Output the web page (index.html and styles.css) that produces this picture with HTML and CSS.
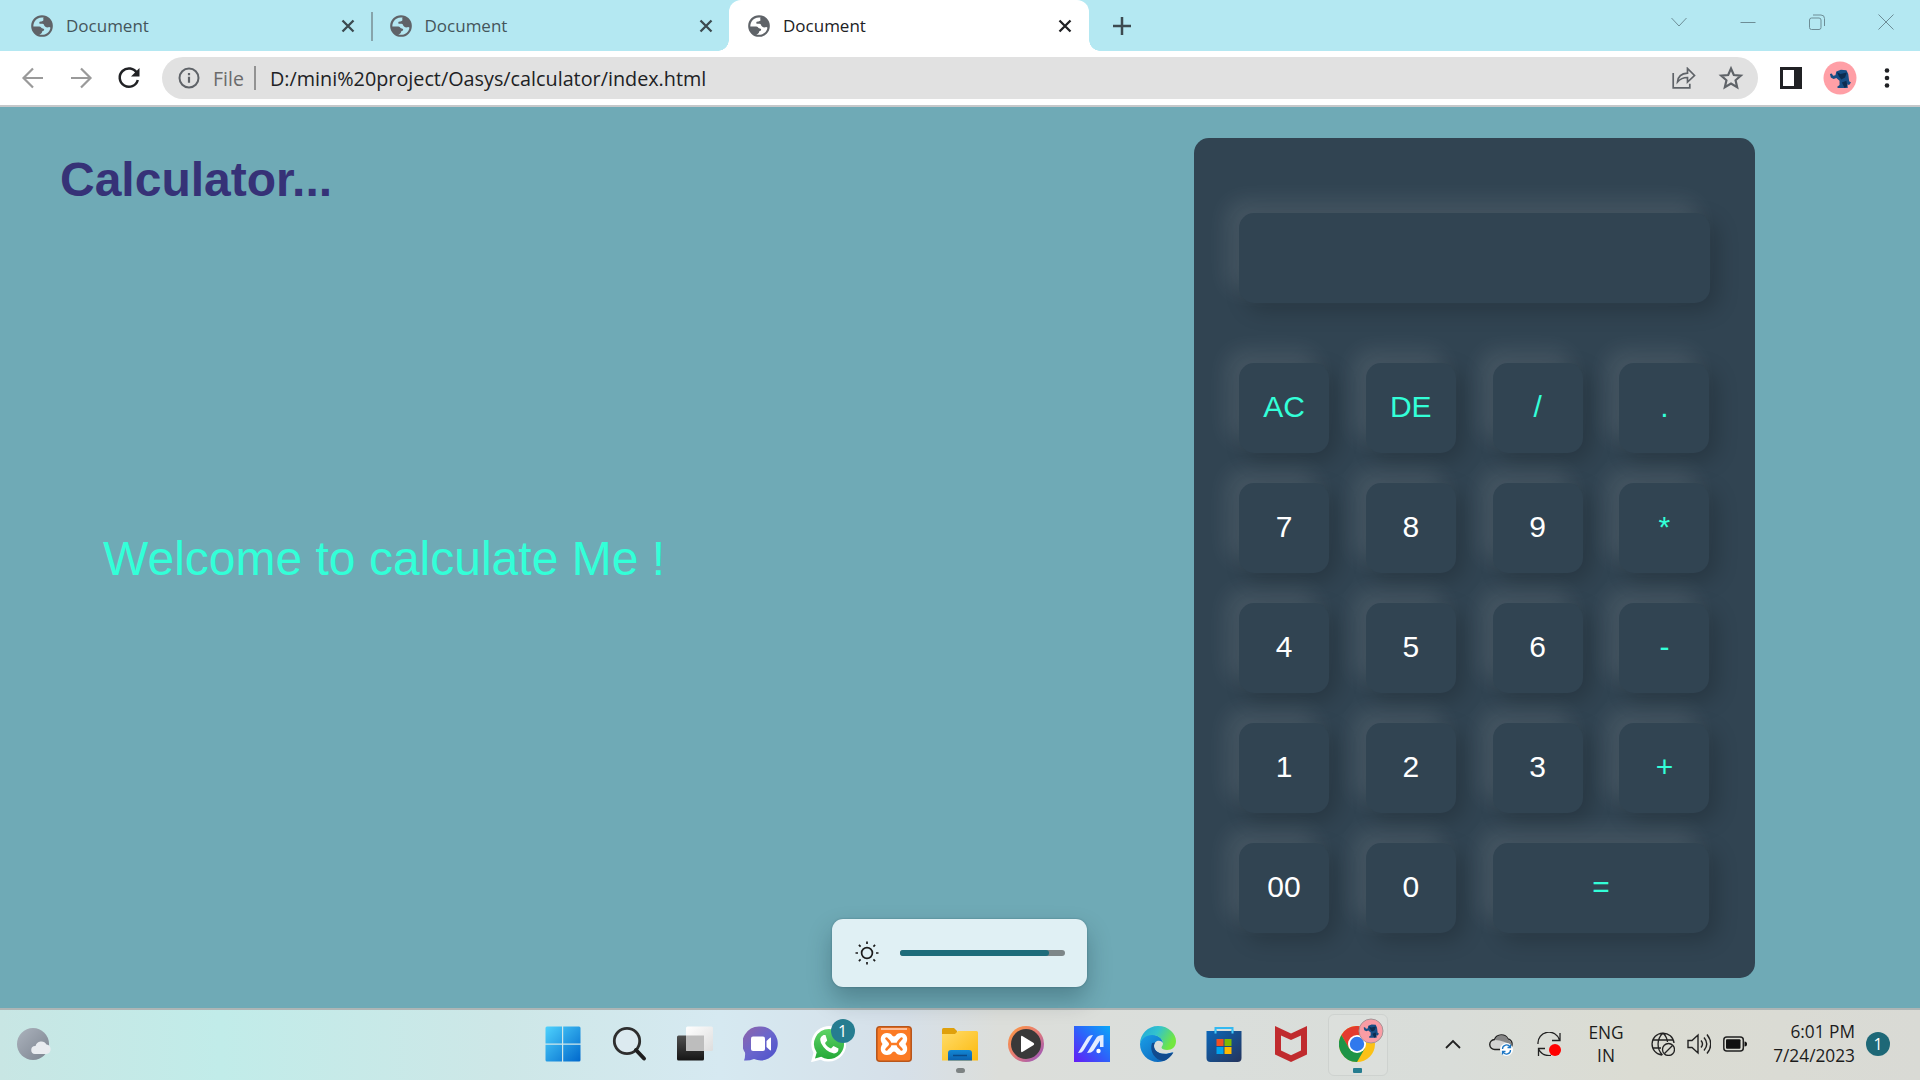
FILE: index.html
```
<!DOCTYPE html>
<html lang="en">
<head>
<meta charset="utf-8">
<title>Document</title>
<link rel="stylesheet" href="styles.css">
</head>
<body>
<svg class="defs" width="0" height="0">
  <defs>
    <symbol id="globe" viewBox="0 0 24 24"><path fill="#5f6368" fill-rule="evenodd" d="M12 2a10 10 0 1 0 0 20 10 10 0 0 0 0-20zM13.500 4.200A8 8 0 0 0 4 12.500h5.500c1.200 0 1.500 1 2.500 1.500s2 0 2 1.500-2 1-2 2-.5 1.500-2.500 2.300c5 1.200 9.500-1.500 10.300-6.300-1.300-1.500-2.300.5-4.300-.5s-1-2.500-3-3-3 .5-3-1 2.500-.8 3.500-1.800-.5-1.500.5-3z"/></symbol>
    <symbol id="cross" viewBox="0 0 14 14"><path d="M1.500 1.500l11 11M12.500 1.500l-11 11" stroke="currentColor" stroke-width="2.300"/></symbol>
    <symbol id="elephant" viewBox="0 0 24 24"><path fill="#164f86" d="M1 7.500L3 7l1.500 2.500L7 9l1-4 5-2 6 .5 2 4 1 8 2 1.500-2 2.500-2-.5.500 4H9.500l-.500-1.500 2.500-2V15L8 12l-3 1-3-1.500z"/><path fill="#0c2c50" d="M8.500 5.500l4 2 7-1.500-2 5.500-4 2-2.500-3zM14 17l5-2 1 6-3 2z"/></symbol>
    <linearGradient id="winG" x1="0" y1="0" x2="1" y2="1"><stop stop-color="#4ed2fd"/><stop offset="1" stop-color="#0068cc"/></linearGradient>
    <linearGradient id="darkG" x1="0" y1="0" x2="0" y2="1"><stop stop-color="#505050"/><stop offset="1" stop-color="#151515"/></linearGradient>
    <linearGradient id="lightG" x1="0" y1="0" x2="1" y2="1"><stop stop-color="#fff"/><stop offset="1" stop-color="#ddd"/></linearGradient>
    <linearGradient id="chatG" x1="0" y1="0" x2="1" y2="1"><stop stop-color="#9064a8"/><stop offset=".5" stop-color="#6a66cc"/><stop offset="1" stop-color="#4b50cc"/></linearGradient>
    <linearGradient id="waG" x1="0" y1="0" x2="0" y2="1"><stop stop-color="#5fd467"/><stop offset="1" stop-color="#25a938"/></linearGradient>
    <linearGradient id="folderG" x1="0" y1="0" x2="1" y2="1"><stop stop-color="#ffdc6a"/><stop offset="1" stop-color="#fcb90d"/></linearGradient>
    <linearGradient id="blueG" x1="0" y1="0" x2="0" y2="1"><stop stop-color="#1287d4"/><stop offset="1" stop-color="#0c62b0"/></linearGradient>
    <linearGradient id="mediaG" x1="0" y1="0" x2="1" y2="1"><stop stop-color="#ff9b3c"/><stop offset=".5" stop-color="#e57a75"/><stop offset="1" stop-color="#8d50c8"/></linearGradient>
    <linearGradient id="asusG" x1="0" y1="1" x2="1" y2="0"><stop stop-color="#661cf5"/><stop offset=".5" stop-color="#2d62fa"/><stop offset="1" stop-color="#0aa8f8"/></linearGradient>
    <linearGradient id="edgeA" x1="0" y1="0" x2="1" y2=".4"><stop stop-color="#1fa5dc"/><stop offset=".5" stop-color="#33c3cd"/><stop offset="1" stop-color="#72e73f"/></linearGradient>
    <linearGradient id="edgeB" x1="0" y1="0" x2="1" y2="1"><stop stop-color="#1aa0e8"/><stop offset="1" stop-color="#0a5cb4"/></linearGradient>
    <linearGradient id="storeG" x1="0" y1="0" x2="1" y2="1"><stop stop-color="#0b66b8"/><stop offset="1" stop-color="#25345c"/></linearGradient>
    <linearGradient id="moonG" x1="0" y1="0" x2="1" y2="1"><stop stop-color="#acb3bd"/><stop offset="1" stop-color="#7b838f"/></linearGradient>
  </defs>
</svg>

<header class="tabstrip">
  <div class="tab"><svg class="favicon"><use href="#globe"/></svg><span class="tab-title">Document</span><svg class="close"><use href="#cross"/></svg></div>
  <div class="tab tab-split"><svg class="favicon"><use href="#globe"/></svg><span class="tab-title">Document</span><svg class="close"><use href="#cross"/></svg></div>
  <div class="tab tab-active"><svg class="favicon"><use href="#globe"/></svg><span class="tab-title">Document</span><svg class="close"><use href="#cross"/></svg></div>
  <svg class="new-tab" viewBox="0 0 18 18"><path d="M9 0v18M0 9h18" stroke="#3c4a50" stroke-width="2.500"/></svg>
  <div class="window-controls">
    <svg viewBox="0 0 16 16"><path d="M.5 4l7.500 8 7.500-8"/></svg>
    <svg viewBox="0 0 16 16"><path d="M.5 8.500h15"/></svg>
    <svg viewBox="0 0 16 16"><rect x=".5" y="4" width="11.500" height="11.500" rx="2"/><path d="M4 1h8q3.500 0 3.500 3.500v7.500"/></svg>
    <svg viewBox="0 0 16 16"><path d="M.5 .5l15 15M15.500 .5l-15 15"/></svg>
  </div>
</header>

<nav class="toolbar">
  <svg class="nav-icon" viewBox="0 0 24 24"><path d="M22 12H3M12 2.500L2.500 12l9.500 9.500" stroke="#9a9a9a"/></svg>
  <svg class="nav-icon" viewBox="0 0 24 24"><path d="M2 12h19M12 2.500l9.500 9.500-9.500 9.500" stroke="#9a9a9a"/></svg>
  <svg class="nav-icon" viewBox="0 0 24 24"><path d="M20 7.200A9.200 9.200 0 1 0 20.800 14" stroke="#202124" stroke-width="2.500"/><path d="M22.500 2v8.500H14z" fill="#202124"/></svg>
  <div class="omnibox">
    <svg class="info" viewBox="0 0 22 22"><circle cx="11" cy="11" r="9.500" fill="none" stroke="#5f6368" stroke-width="2"/><path d="M11 9.800v6M11 6v2.200" stroke="#5f6368" stroke-width="2.200"/></svg>
    <span class="scheme">File</span>
    <span class="divider"></span>
    <span class="url">D:/mini%20project/Oasys/calculator/index.html</span>
    <svg class="share" viewBox="0 0 24 22"><path d="M1.200 6v14.800h16.600v-4" /><path d="M5.500 15C6 9 10 6.500 15.500 6.200V1.500l7 7-7 6.500v-4.500c-4 0-7 1-10 4.500z"/></svg>
    <svg class="star" viewBox="0 0 24 24"><path d="M12 3.200l2.600 6 6.500.6-4.900 4.300 1.500 6.400-5.700-3.400-5.700 3.400 1.500-6.400-4.900-4.300 6.500-.6z"/></svg>
  </div>
  <svg class="side-panel" viewBox="0 0 22 22"><path fill="#202124" fill-rule="evenodd" d="M0 0h22v22H0zM3 3v16h11V3z"/></svg>
  <svg class="avatar" viewBox="0 0 34 34"><circle cx="17" cy="17" r="16.500" fill="#ff9fa6"/><use href="#elephant" x="6" y="6" width="22" height="22"/></svg>
  <svg class="menu" viewBox="0 0 6 22"><circle cx="3" cy="3.500" r="2.300"/><circle cx="3" cy="11" r="2.300"/><circle cx="3" cy="18.500" r="2.300"/></svg>
</nav>

<main class="page">
  <section class="intro">
    <h1>Calculator...</h1>
    <p>Welcome to calculate Me !</p>
  </section>
  <section class="calculator">
    <div class="display"></div>
    <div class="keys">
      <button class="key op">AC</button><button class="key op">DE</button><button class="key op">/</button><button class="key op">.</button>
      <button class="key">7</button><button class="key">8</button><button class="key">9</button><button class="key op">*</button>
      <button class="key">4</button><button class="key">5</button><button class="key">6</button><button class="key op">-</button>
      <button class="key">1</button><button class="key">2</button><button class="key">3</button><button class="key op">+</button>
      <button class="key">00</button><button class="key">0</button><button class="key op equal">=</button>
    </div>
  </section>
  <aside class="brightness">
    <svg class="sun" viewBox="0 0 24 24"><circle cx="12" cy="12" r="5.400"/><path d="M12 .5v2.500M12 21v2.500M.5 12H3M21 12h2.500M3.900 3.900l1.700 1.700M18.400 18.400l1.700 1.700M3.900 20.100l1.700-1.700M18.400 5.600l1.700-1.700"/></svg>
    <div class="track"><div class="level" style="width: 90.500%"></div></div>
  </aside>
</main>

<footer class="taskbar">
  <svg class="weather" viewBox="0 0 36 34"><circle cx="16" cy="17" r="16" fill="url(#moonG)"/><path d="M18 27a4 4 0 0 1 .5-8 6 6 0 0 1 11-1.500 4.800 4.800 0 0 1 0 9.500z" fill="#e9ecf0"/></svg>
  <div class="apps">
    <div class="app"><svg viewBox="0 0 36 36"><path fill="url(#winG)" d="M.5 2q0-1.500 1.500-1.500h15v17H.5zM18.200.5H34q1.500 0 1.500 1.500v15.500H18.200zM.5 18.700H17v16.800H2q-1.500 0-1.500-1.500zM18.200 18.700h17.300V34q0 1.500-1.500 1.500H18.200z"/></svg></div>
    <div class="app"><svg viewBox="0 0 36 36"><circle cx="16" cy="15" r="12.700" fill="#dceaf0" stroke="#2e2e2e" stroke-width="2.800"/><path d="M25 24l8 8.500" stroke="#1e1e1e" stroke-width="4" stroke-linecap="round"/></svg></div>
    <div class="app"><svg viewBox="0 0 36 36"><rect y="9.500" width="27" height="25" rx="1.500" fill="url(#darkG)"/><rect x="9" y=".5" width="27" height="24.500" rx="1.500" fill="url(#lightG)"/><path fill="#bdbdbd" d="M9 9.500h18V25H10q-1 0-1-1z"/></svg></div>
    <div class="app"><svg viewBox="0 0 36 36"><path fill="url(#chatG)" d="M18 .5a17 17 0 1 1-7 32.600Q6 35 1 34.500q1.500-4 1-8A17 17 0 0 1 18 .5z"/><rect x="8" y="10.500" width="14" height="14.500" rx="2" fill="#fff"/><path fill="#fff" d="M23.500 15l3.500-3.300q1-.5 1 .8v11q0 1.300-1 .8L23.500 21z"/></svg></div>
    <div class="app"><svg viewBox="0 0 36 36"><path fill="#fff" d="M19 0a17.800 17.800 0 1 1-8.500 33.700L1 36.200l2.500-9.500A18 18 0 0 1 19 0z"/><path fill="url(#waG)" d="M19 3a15 15 0 1 1-7.800 27.800L5 32.500l1.700-6A15 15 0 0 1 19 3z"/><path fill="#fff" d="M13.500 9q-5 2.500-2.500 8 4.500 9 13 10.500 4.500-.5 4.500-5l-5-2.500-2.500 2.500q-4.500-2-6-5.500l2.200-2.500L15.500 9z"/></svg><span class="badge">1</span></div>
    <div class="app"><svg viewBox="0 0 36 36"><rect x=".8" y=".8" width="34.400" height="34.400" rx="3" fill="#fb7a24" stroke="#b8561c" stroke-width="1.600"/><path d="M5 3h26" stroke="#ffbe98" stroke-width="2"/><path fill="#fff" d="M11 7c5 0 5 3.500 7 3.500S20 7 25 7c6 0 8 6.500 4.500 11C33 22.500 31 29 25 29c-5 0-5-3.500-7-3.500S16 29 11 29C5 29 3 22.500 6.500 18 3 13.500 5 7 11 7z"/><path fill="none" stroke="#fb7a24" stroke-width="2.600" stroke-linecap="round" d="M10.500 12.500c1.500 2 3.500 2.500 4 5.500-.5 3-2.500 3.500-4 5.500M25.500 12.500c-1.500 2-3.500 2.500-4 5.500.5 3 2.500 3.500 4 5.500M14.500 18h7"/></svg></div>
    <div class="app running"><svg viewBox="0 0 36 36"><path fill="#dfa00c" d="M0 3.500Q0 2 1.500 2H12l3 3v4H0z"/><path fill="url(#folderG)" d="M0 8h13l3-3h18.500Q36 5 36 6.500V34.500H0z"/><path fill="url(#blueG)" d="M6 34.500V27q0-3 3-3h18q3 0 3 3v7.500z"/><path d="M11 29.500h14" stroke="#0a4a88" stroke-width="1.500"/></svg></div>
    <div class="app"><svg viewBox="0 0 36 36"><circle cx="18" cy="18" r="18" fill="url(#mediaG)"/><circle cx="18" cy="18" r="15" fill="#393939"/><path fill="#fff" d="M13 11.200q0-2 1.700-1l11 6.800q1 1 0 2l-11 6.800q-1.700 1-1.700-1z"/></svg></div>
    <div class="app"><svg viewBox="0 0 36 36"><path fill="url(#asusG)" d="M0 0h36v36H0z"/><path fill="#e3ecff" d="M4 27L13 12q2-3 6-3l-9.500 15.500q-1.500 2.500-5.500 2.500zM13 27l9.500-15.500Q24 9 29.500 9v12H26v-6.500l-6.500 10q-2 2.500-6.500 2.500z"/><circle cx="24.500" cy="25" r="2.200" fill="#fff"/></svg></div>
    <div class="app"><svg viewBox="0 0 36 36"><path fill="url(#edgeB)" d="M0 18c1-8 9-11 15-9 5 1 8 5 8 8-3-4-9-2-9 3 0 7 9 10 19 6-3 6-8 10-15 10C8 36 0 28 0 18z"/><path fill="#114b8f" d="M12 17c-3 8 3 17 11 18 4-1 8-4 10.500-8.500C24 30 14 27 14 20q0-2 1-3.500z"/><path fill="url(#edgeA)" d="M0 18C0 8 8 0 18 0c11 0 18 8 18 15 0 6-4 9-9 9-3 0-5.500-1-5.500-2.500 0-1 1.500-1.500 1.500-4.500 0-4-5-8-11-8C6 9 1 13 0 18z"/></svg></div>
    <div class="app"><svg viewBox="0 0 36 36"><path fill="none" stroke="#33b9f1" stroke-width="2" d="M9.500 8V2h17v6"/><path fill="url(#storeG)" d="M.5 5h35v27q0 4-4 4h-27q-4 0-4-4z"/><path fill="none" stroke="#45cbfa" stroke-width="2" d="M9.500 7.500V4M26.500 7.500V4"/><path fill="#f25022" d="M10.500 13h7v7h-7z"/><path fill="#7fba00" d="M18.500 13h7v7h-7z"/><path fill="#00a4ef" d="M10.500 21h7v7h-7z"/><path fill="#ffb900" d="M18.500 21h7v7h-7z"/></svg></div>
    <div class="app"><svg viewBox="0 0 36 36"><path fill="#c02b2e" fill-rule="evenodd" d="M2 0l16 7.500L34 0v28.500L18 36 2 28.500zM8 9.500v15l10 4.700 10-4.700v-15L18 14z"/></svg></div>
    <div class="app current"><svg viewBox="0 0 36 36"><circle cx="18" cy="18" r="18" fill="#fbc116"/><path fill="#e33b2e" d="M2.400 9A18 18 0 0 1 33.600 9H18l-8 13.500z"/><path fill="#1e9447" d="M2.400 9A18 18 0 0 0 18 36l7.800-13.500H10.200z"/><circle cx="18" cy="18" r="9" fill="#fff"/><circle cx="18" cy="18" r="7.200" fill="#3079ed"/></svg><svg class="profile-badge" viewBox="0 0 26 26"><circle cx="13" cy="13" r="12" fill="#f99ca4" stroke="#a59396"/><use href="#elephant" x="5" y="4.500" width="16" height="16"/></svg></div>
  </div>
  <div class="tray">
    <svg class="chevron" viewBox="0 0 16 10"><path d="M1 9l7-7 7 7" fill="none" stroke="#222" stroke-width="1.800"/></svg>
    <svg class="cloud" viewBox="0 0 24 24"><path d="M6 17.500a5 5 0 0 1-.5-10A7.500 7.500 0 0 1 19 7a5 5 0 0 1 4 5.500q0 3-3 5z" fill="#d3d3d3" stroke="#222" stroke-width="1.400"/><path d="M6 8a7 7 0 0 1 13-.5q3.500 1 3.500 6-7-5-16.500-5.500z" fill="#868686"/><circle cx="17.500" cy="17.500" r="6.500" fill="#fff"/><path d="M13.500 17a4 4 0 0 1 7.500-2M21.500 18a4 4 0 0 1-7.500 2M21.500 12.500V15.500H18.500M13.500 22.500v-3h3" fill="none" stroke="#1b76c4" stroke-width="1.300"/></svg>
    <svg class="update" viewBox="0 0 24 24"><path d="M1 12A11 11 0 0 1 22.500 8M23 1v7.500h-8M14 23.500C9 24 4 22 1.500 17M1.500 24v-7.500H8" fill="none" stroke="#222" stroke-width="1.300"/><circle cx="18" cy="18" r="6" fill="#f00"/></svg>
    <div class="lang"><span>ENG</span><span>IN</span></div>
    <div class="status">
      <svg viewBox="0 0 24 24"><g fill="none" stroke="#222" stroke-width="1.300"><path d="M11 23A11 11 0 1 1 23 11M1.500 8h21M1.500 16H10M11.500 23c-6-6-6-16 .5-22M12 1q4 4 4.500 9"/><circle cx="17.500" cy="17.500" r="6"/><path d="M13.500 21.500l8-8"/></g></svg>
      <svg viewBox="0 0 24 24"><path d="M1 8.500h4L11 3v18l-6-5.500H1zM14 8.500q3 3.500 0 7M17 5.500q5.500 6.500 0 13M20 2.500q7.500 9.500 0 19" fill="none" stroke="#222" stroke-width="1.400"/></svg>
      <svg viewBox="0 0 24 24"><rect x=".8" y="5" width="19.500" height="14" rx="3" fill="none" stroke="#222" stroke-width="1.500"/><rect x="3" y="7.200" width="14.500" height="9.600" rx="1" fill="#111"/><path d="M21.500 9.500q2.500 0 2.500 2.500t-2.500 2.500z" fill="#111"/></svg>
    </div>
    <div class="clock"><span>6:01 PM</span><span>7/24/2023</span></div>
    <span class="notifications">1</span>
  </div>
</footer>
</body>
</html>
```
FILE: styles.css
```
* { box-sizing: border-box; }
body {
  margin: 0;
  width: 1920px;
  height: 1080px;
  overflow: hidden;
  display: flex;
  flex-direction: column;
  font-family: "Open Sans", "Noto Sans", sans-serif;
}
svg { display: block; flex: none; }
.defs { position: absolute; }

/* tab strip */
.tabstrip {
  height: 51px;
  flex: none;
  display: flex;
  align-items: center;
  background: #b4e8f2;
  padding-left: 12px;
}
.tab {
  width: 358.5px;
  height: 51px;
  flex: none;
  display: flex;
  align-items: center;
  padding: 0 16px 0 17px;
  color: #44555b;
  position: relative;
}
.tab-split::before {
  content: "";
  position: absolute;
  left: 0;
  top: 12px;
  width: 2px;
  height: 29px;
  background: #87a4ab;
}
.tab-active {
  width: 360px;
  background: #fff;
  border-radius: 12px 12px 0 0;
  color: #202124;
}
.tab-active::before, .tab-active::after {
  content: "";
  position: absolute;
  bottom: 0;
  width: 11px;
  height: 11px;
}
.tab-active::before { left: -11px; background: radial-gradient(circle at 0 0, transparent 10.500px, #fff 11px); }
.tab-active::after { right: -11px; background: radial-gradient(circle at 100% 0, transparent 10.500px, #fff 11px); }
.favicon { width: 26px; height: 26px; }
.tab-title { flex: 1; margin-left: 11px; font-size: 17px; }
.close { width: 14px; height: 14px; color: #3c4a50; }
.tab-active .close { color: #202124; margin-right: 1px; }
.new-tab { width: 18px; height: 18px; margin-left: 24px; }
.window-controls { margin-left: auto; display: flex; gap: 53px; padding-right: 26px; margin-bottom: 8px; }
.window-controls svg { width: 16px; height: 16px; fill: none; stroke: #6d8d96; stroke-width: 1; }

/* address bar */
.toolbar {
  height: 56px;
  flex: none;
  display: flex;
  align-items: center;
  background: #fff;
  border-bottom: 2px solid #c6c8ca;
  padding-left: 21px;
}
.nav-icon { width: 24px; height: 24px; margin-right: 24px; fill: none; stroke-width: 2.200; }
.omnibox {
  width: 1596px;
  height: 42px;
  margin-left: -3px;
  border-radius: 21px;
  background: #e1e1e1;
  display: flex;
  align-items: center;
  padding: 0 16px;
  font-size: 19.800px;
}
.info { width: 22px; height: 22px; }
.scheme { width: 41px; margin-left: 13px; color: #6b6b6b; font-size: 19.500px; }
.divider { width: 2px; height: 24px; background: #929292; margin-right: 14px; }
.url { flex: 1; color: #202124; white-space: nowrap; }
.share { width: 24px; height: 22px; fill: none; stroke: #5f6368; stroke-width: 1.700; }
.star { width: 26px; height: 26px; margin: 0 -2px 0 22px; fill: none; stroke: #5f6368; stroke-width: 2; }
.side-panel { width: 22px; height: 22px; margin-left: 22px; }
.avatar { width: 34px; height: 34px; margin-left: 21px; }
.menu { width: 6px; height: 22px; margin-left: 27px; fill: #202124; }

/* page */
.page {
  height: 901px;
  flex: none;
  display: flex;
  justify-content: space-between;
  align-items: flex-start;
  padding: 31px 165px 30px 60px;
  background: #6faab6;
  font-family: Arial, "Liberation Sans", sans-serif;
  position: relative;
}
.intro h1 { margin: 14px 0 0; font-size: 48px; line-height: 56px; color: #363277; }
.intro p { margin: 323px 0 0 43px; font-size: 48px; line-height: 56px; color: #33ffd8; }
.calculator {
  width: 561px;
  height: 840px;
  border-radius: 15px;
  background: #314452;
  padding: 75px 45px 45px;
}
.display, .key {
  border: 0;
  border-radius: 15px;
  background: #314452;
  box-shadow: -12px -12px 22.500px rgba(255, 255, 255, .1), 7.500px 7.500px 22.500px rgba(0, 0, 0, .2);
}
.display { height: 90px; margin-bottom: 60px; }
.keys { display: grid; grid-template-columns: repeat(4, 90px); column-gap: 36.800px; row-gap: 30px; }
.key { height: 90px; padding: 0 0 2px; font: 30px Arial, "Liberation Sans", sans-serif; color: #fff; }
.op { color: #33ffd8; }
.equal { grid-column: span 2; }

/* brightness flyout */
.brightness {
  position: absolute;
  left: 832px;
  top: 812px;
  width: 255px;
  height: 68px;
  border-radius: 11px;
  background: #e0f0f4;
  box-shadow: 0 0 2px rgba(0, 40, 50, .35), 0 12px 24px rgba(0, 30, 40, .28);
  display: flex;
  align-items: center;
  padding: 0 22px 0 23px;
}
.sun { width: 24px; height: 24px; fill: none; stroke: #1b1b1b; stroke-width: 1.700; }
.track { flex: 1; height: 6px; margin-left: 21px; border-radius: 3px; background: #7d8688; }
.level { height: 6px; border-radius: 3px; background: #1e6c7a; }

/* taskbar */
.taskbar {
  height: 72px;
  flex: none;
  display: flex;
  align-items: center;
  border-top: 2px solid #adb5b5;
  background: linear-gradient(90deg, #c8e6e4 0, #c1ece9 220px, #cde7e7 500px, #d6e9f1 720px, #d6e0e9 900px, #dcdeda 1000px, #dadedb 1200px, #d9ddd9 1450px, #dbdcd3 1640px, #d9dad5 1920px);
  padding: 0 30px 0 17px;
}
.weather { width: 36px; height: 34px; margin-top: -2px; }
.apps { display: flex; margin-left: 477px; }
.app {
  width: 66.150px;
  height: 70px;
  display: flex;
  align-items: center;
  justify-content: center;
  position: relative;
}
.app > svg { width: 36px; height: 36px; margin-top: -2px; }
.badge {
  position: absolute;
  left: 36px;
  top: 9px;
  width: 24px;
  height: 24px;
  border-radius: 50%;
  background: #267d90;
  color: #fff;
  font-size: 16px;
  line-height: 24px;
  text-align: center;
}
.running::after, .current::after {
  content: "";
  position: absolute;
  left: 29px;
  bottom: 7px;
  width: 9px;
  height: 5px;
  border-radius: 3px;
  background: #7d8383;
}
.current::after { background: #267d90; border-radius: 1px; }
.current::before {
  content: "";
  position: absolute;
  left: 4px;
  top: 4px;
  width: 58px;
  height: 60px;
  border: 1.500px solid #ced2cf;
  border-radius: 6px;
  background: rgba(255, 255, 255, .08);
}
.current > svg { position: relative; }
.current > .profile-badge { position: absolute; left: 34px; top: 8px; width: 26px; height: 26px; margin: 0; }
.tray { display: flex; align-items: center; margin-left: auto; margin-top: -2px; color: #1c1c1c; }
.chevron { width: 16px; height: 10px; margin-right: 28px; }
.cloud { width: 24px; height: 24px; margin-right: 24px; }
.update { width: 24px; height: 24px; margin-right: 26px; }
.lang, .clock { display: flex; flex-direction: column; line-height: 23px; font-size: 17.300px; }
.lang { width: 38px; align-items: center; margin-right: 26px; }
.status { display: flex; gap: 12px; }
.status svg { width: 24px; height: 24px; }
.clock { width: 108px; align-items: flex-end; line-height: 24px; }
.notifications {
  width: 24px;
  height: 24px;
  margin-left: 11px;
  border-radius: 50%;
  background: #1e6877;
  color: #fff;
  font-size: 16px;
  line-height: 24px;
  text-align: center;
}
```
